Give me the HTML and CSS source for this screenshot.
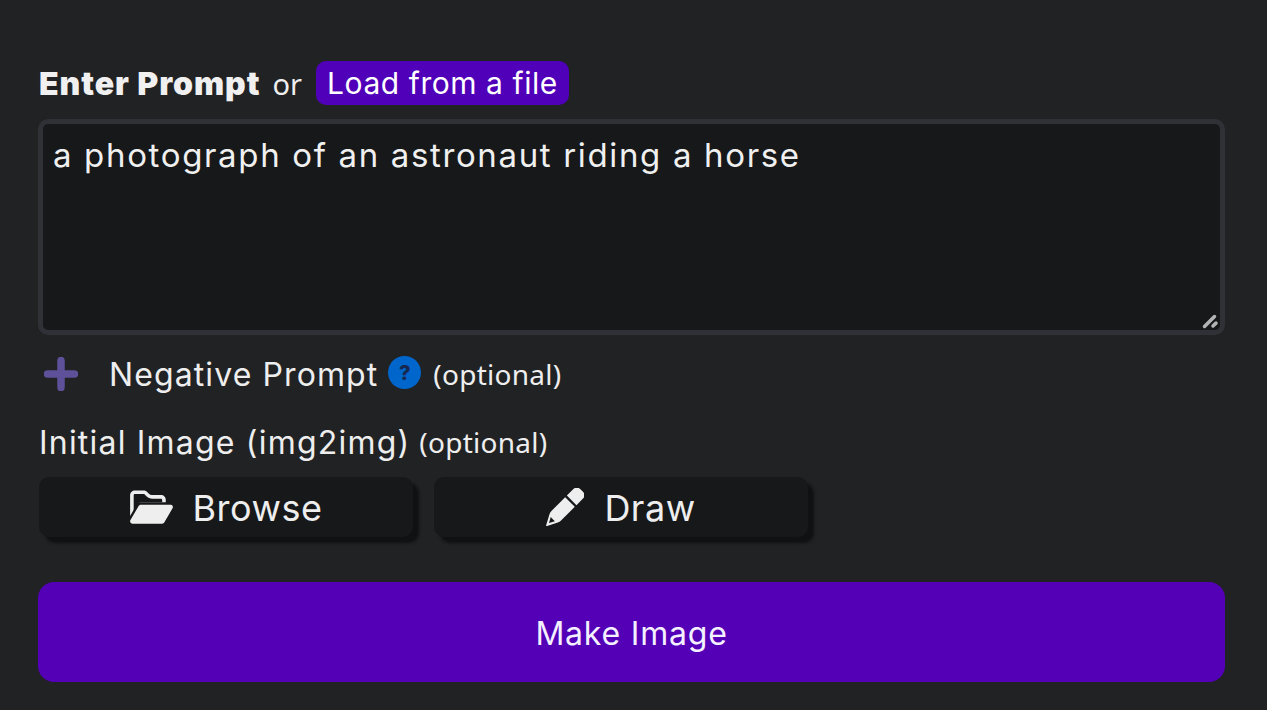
FILE: index.html
```html
<!DOCTYPE html>
<html lang="en">
<head>
<meta charset="utf-8">
<title>Make Image</title>
<link rel="stylesheet" href="styles.css">
</head>
<body>
<main class="editor">
  <div class="prompt-head">
    <strong class="prompt-title">Enter Prompt</strong>
    <span class="or">or</span>
    <button class="load-btn" type="button">Load from a file</button>
  </div>
  <div class="prompt-box">
    <textarea class="prompt-input" spellcheck="false">a photograph of an astronaut riding a horse</textarea>
    <svg class="grip" viewBox="0 0 17 17" aria-hidden="true"><path d="M2.500 14.500 L12.500 4.500" /><path d="M11 14 L14 11" /></svg>
  </div>
  <div class="negative-row">
    <svg class="plus" viewBox="0 0 34 34" aria-hidden="true"><path d="M17 3.500V30.500M3.500 17H30.500"/></svg>
    <span class="negative-label">Negative Prompt</span>
    <span class="help">?</span>
    <span class="optional">(optional)</span>
  </div>
  <div class="init-label"><span class="init-text">Initial Image (img2img)</span> <span class="optional">(optional)</span></div>
  <div class="init-btns">
    <button class="tool-btn" type="button">
      <svg class="ico-folder" viewBox="0 0 576 512" aria-hidden="true"><path d="M88.700 223.800L0 375.800V96C0 60.700 28.700 32 64 32H181.500c17 0 33.300 6.700 45.300 18.700l26.500 26.500c12 12 28.300 18.700 45.300 18.700H416c35.300 0 64 28.700 64 64v32H144c-22.800 0-43.800 12.100-55.300 31.800zm27.600 16.100C122.100 230 132.600 224 144 224H544c11.500 0 22 6.100 27.700 16.100s5.700 22.200-.1 32.100l-112 192C453.900 474 443.400 480 432 480H32c-11.500 0-22-6.100-27.700-16.100s-5.700-22.200 .1-32.100l112-192z" class="solid"/><path class="cut" d="M48 96V320L88 252C100 232 120 192 144 192H432V160C432 152 424 144 416 144H298C268 144 240 132 220 112L193 85C190 82 186 80 181 80H64C56 80 48 88 48 96Z"/></svg>
      <span class="btn-text">Browse</span>
    </button>
    <button class="tool-btn" type="button">
      <svg class="ico-pencil" viewBox="0 0 512 512" aria-hidden="true"><path d="M410.300 231L498.700 142.600C523.700 117.600 523.700 77.100 498.700 52.100L459.900 13.300C434.900-11.700 394.400-11.700 369.400 13.300L281 101.700 410.300 231zM258.400 124.300L73.500 309.200C61.200 321.500 52 336.600 46.800 353.200L1 504.800C-1.500 513.200 10 514 16 511L158.800 465.200C175.400 460 190.500 450.800 202.800 438.500L387.700 253.600 258.400 124.300z"/><path class="nib" d="M40 472L64 392L92 420L120 448Z"/></svg>
      <span class="btn-text">Draw</span>
    </button>
  </div>
  <button class="make-btn" type="button">Make Image</button>
</main>
</body>
</html>
```
FILE: styles.css
```css
* { box-sizing: border-box; }
html, body { margin: 0; height: 100%; }
body {
  background: #212224;
  color: #eeeeee;
  font-family: "Inter", "Open Sans", "Liberation Sans", sans-serif;
  overflow: hidden;
}
.editor {
  width: 1267px;
  height: 710px;
  padding: 61px 42px 0 38px;
  display: flex;
  flex-direction: column;
}
button { font-family: inherit; border: 0; color: inherit; }
.prompt-head {
  display: flex;
  align-items: center;
  height: 44px;
  padding-left: 1px;
}
.prompt-title { font-size: 32px; font-weight: 900; letter-spacing: 0.95px; color: #f0f0f0; }
.or { font-size: 29px; margin-left: 12px; font-family: "Noto Sans", sans-serif; }
.load-btn {
  margin-left: 14px;
  width: 253px;
  height: 44px;
  padding: 0;
  border-radius: 10px;
  background: #5000b9;
  color: #ffffff;
  font-size: 30px;
  letter-spacing: 0.55px;
}
.prompt-box { position: relative; margin-top: 14px; height: 216px; }
.prompt-input {
  display: block;
  width: 100%;
  height: 100%;
  resize: none;
  background: #17181a;
  border: 5px solid #2f3136;
  border-radius: 10px;
  color: #f0f0f0;
  font-family: inherit;
  font-size: 33px;
  letter-spacing: 1.65px;
  line-height: 40px;
  padding: 11px 10px;
  outline: none;
  overflow: hidden;
}
.grip {
  position: absolute;
  right: 6px;
  bottom: 6px;
  width: 17px;
  height: 17px;
  fill: none;
  stroke: #b4b4b4;
  stroke-width: 3.500;
  stroke-linecap: round;
}
.negative-row { display: flex; align-items: center; height: 40px; margin-top: 19px; padding-left: 6px; }
.plus { width: 34px; height: 34px; fill: none; stroke: #5e5099; stroke-width: 7.500; stroke-linecap: round; }
.negative-label { margin-left: 31px; font-size: 32px; letter-spacing: 1.1px; }
.help {
  margin-left: 10px;
  margin-top: -3px;
  width: 33px;
  height: 33px;
  border-radius: 50%;
  background: #0066cc;
  color: #17274f;
  font-size: 20px;
  font-weight: 800;
  display: flex;
  align-items: center;
  justify-content: center;
}
.optional { font-family: "Noto Sans", sans-serif; font-size: 28px; letter-spacing: 0.25px; margin-left: 12px; }
.init-label { display: flex; align-items: center; height: 40px; margin-top: 28px; font-size: 32px; padding-left: 1px; }
.init-text { letter-spacing: 1.2px; }
.init-label .optional { margin-left: 9px; }
.init-btns { display: flex; gap: 21px; margin-top: 15px; padding-left: 1px; }
.tool-btn {
  width: 374px;
  height: 60px;
  border-radius: 10px;
  background: #17181a;
  color: #eeeeee;
  box-shadow: 6px 6px 3px #101112;
  font-size: 36px;
  letter-spacing: 0.5px;
  display: flex;
  align-items: center;
  justify-content: center;
  gap: 20px;
}
.btn-text { padding-top: 2px; }
.ico-folder { width: 43px; height: 38px; }
.ico-folder .solid { fill: #eeeeee; }
.ico-folder .cut { fill: #17181a; }
.ico-pencil { width: 38px; height: 38px; fill: #eeeeee; }
.ico-pencil .nib { fill: #17181a; }
.make-btn {
  margin-top: 45px;
  padding-top: 3px;
  width: 1187px;
  height: 100px;
  border-radius: 16px;
  background: #5300b7;
  color: #f4f0ff;
  font-size: 32px;
  letter-spacing: 0.8px;
}
```
